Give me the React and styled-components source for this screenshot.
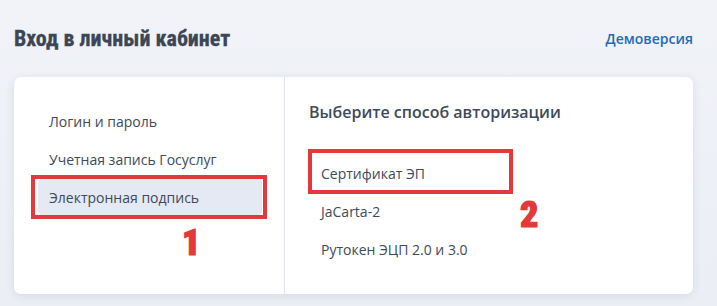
import React from "react"
import styled, { createGlobalStyle } from "styled-components"

const GlobalStyle = createGlobalStyle`
  html, body {
    margin: 0;
    padding: 0;
    background: #edf0f6;
  }
  body {
    font-family: "Open Sans", "Noto Sans", sans-serif;
    color: #3d4a5a;
  }
`

const Page = styled.div`
  width: 717px;
  height: 306px;
  box-sizing: border-box;
  padding: 0 24px 0 14px;
  background: linear-gradient(180deg, #f1f3f8 0%, #ebeef5 100%);
  overflow: hidden;
`

const Header = styled.div`
  display: flex;
  align-items: center;
  justify-content: space-between;
  height: 77px;
  h1 {
    margin: -1px 0 0;
    font-family: "Roboto Condensed", "Liberation Sans Narrow", "DejaVu Sans Condensed", Roboto, sans-serif;
    font-stretch: condensed;
    font-size: 22px;
    font-weight: 700;
    color: #3c4654;
    -webkit-text-stroke: 0.3px #3c4654;
  }
  a {
    margin-top: -1px;
    font-size: 14px;
    font-weight: 600;
    color: #1f6cb8;
    text-decoration: none;
  }
`

const Card = styled.div`
  display: flex;
  background: #fff;
  border-radius: 7px;
  box-shadow: 0 2px 10px rgba(60, 80, 120, 0.12);
`

const Sidebar = styled.div`
  width: 271px;
  box-sizing: border-box;
  padding: 26px 22px 24px 24px;
  border-right: 1px solid #e1e4ea;
  display: flex;
  flex-direction: column;
  gap: 2px;
`

const NavItem = styled.div`
  position: relative;
  height: 36px;
  display: flex;
  align-items: center;
  padding-left: 11px;
  font-size: 14px;
  border-radius: 4px;
  background: ${p => (p.$active ? "#e4e9f3" : "transparent")};
  color: #3d4a5a;
`

const Methods = styled.div`
  flex: 1;
  padding: 24px 24px 26px;
  h2 {
    margin: 0 0 31px;
    font-size: 16px;
    line-height: 22px;
    font-weight: 600;
    color: #3d4a5a;
  }
`

const MethodItem = styled.div`
  position: relative;
  height: 38px;
  display: flex;
  align-items: center;
  padding-left: 12px;
  font-size: 14px;
  color: #3d4a5a;
`

const Mark = styled.div`
  position: absolute;
  top: ${p => p.$top}px;
  bottom: ${p => p.$bottom}px;
  left: ${p => p.$left}px;
  ${p => (p.$width ? `width: ${p.$width}px;` : `right: ${p.$right}px;`)}
  border: 4px solid #e3393a;
  box-sizing: border-box;
  pointer-events: none;
`

const Num = styled.span`
  position: absolute;
  left: ${p => p.$x}px;
  top: ${p => p.$y}px;
  font-family: "Roboto Condensed", "Liberation Sans Narrow", "DejaVu Sans Condensed", Roboto, sans-serif;
  font-stretch: condensed;
  font-size: 36px;
  line-height: 1;
  font-weight: 900;
  color: #e3393a;
  -webkit-text-stroke: 1.2px #e3393a;
`

export default function App() {
  return (
    <>
      <GlobalStyle />
      <Page>
        <Header>
          <h1>Вход в личный кабинет</h1>
          <a href="#demo">Демоверсия</a>
        </Header>
        <Card>
          <Sidebar>
            <NavItem>Логин и пароль</NavItem>
            <NavItem>Учетная запись Госуслуг</NavItem>
            <NavItem $active>
              Электронная подпись
              <Mark $top={-4} $bottom={-4} $left={-7} $right={-5} />
              <Num $x={144} $y={46}>1</Num>
            </NavItem>
          </Sidebar>
          <Methods>
            <h2>Выберите способ авторизации</h2>
            <MethodItem>
              Сертификат ЭП
              <Mark $top={-5} $bottom={-2} $left={-1} $width={205} />
              <Num $x={211} $y={43}>2</Num>
            </MethodItem>
            <MethodItem>JaCarta-2</MethodItem>
            <MethodItem>Рутокен ЭЦП 2.0 и 3.0</MethodItem>
          </Methods>
        </Card>
      </Page>
    </>
  )
}
